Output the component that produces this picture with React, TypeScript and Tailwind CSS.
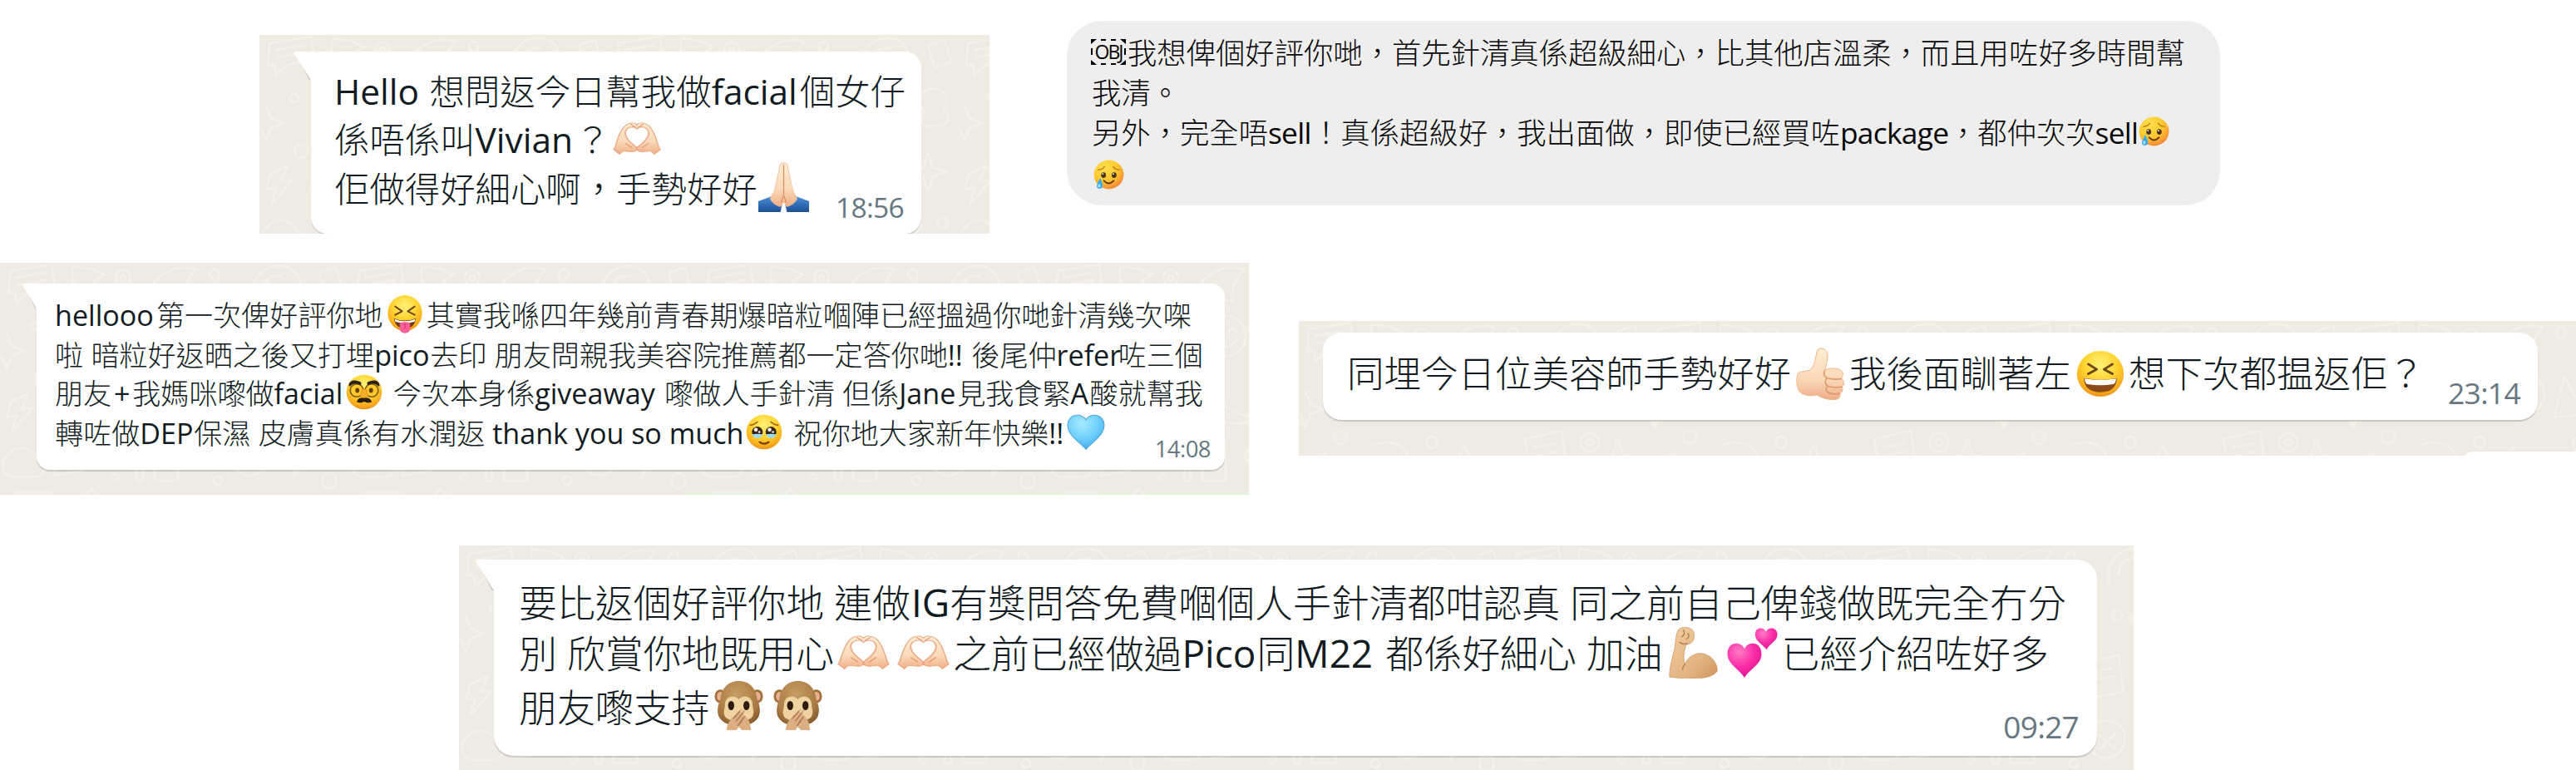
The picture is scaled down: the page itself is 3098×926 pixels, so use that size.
import type { ReactNode } from "react";
import clsx from "clsx";

/* ---------- Emoji ---------- */

interface EmojiProps {
  label: string;
  className: string;
  children: ReactNode;
}

const Emoji = ({ label, className, children }: EmojiProps) => (
  <svg
    role="img"
    aria-label={label}
    viewBox="0 0 64 64"
    preserveAspectRatio="none"
    className={clsx("block shrink-0", className)}
  >
    {children}
  </svg>
);

const Gradients = () => (
  <svg className="absolute h-0 w-0" aria-hidden="true">
    <defs>
      <radialGradient id="face" cx="0.5" cy="0.3" r="0.72">
        <stop offset="0" stopColor="#fff27a" />
        <stop offset="0.5" stopColor="#ffd42f" />
        <stop offset="0.85" stopColor="#f9a91c" />
        <stop offset="1" stopColor="#e98a10" />
      </radialGradient>
      <radialGradient id="softFace" cx="0.35" cy="0.25" r="0.85">
        <stop offset="0" stopColor="#ffe14d" />
        <stop offset="0.55" stopColor="#ffc62e" />
        <stop offset="1" stopColor="#f47b3a" />
      </radialGradient>
      <linearGradient id="skin" x1="0" y1="0" x2="0" y2="1">
        <stop offset="0" stopColor="#fdeed3" />
        <stop offset="0.6" stopColor="#fad9b8" />
        <stop offset="1" stopColor="#efae86" />
      </linearGradient>
      <linearGradient id="tanSkin" x1="0" y1="0" x2="1" y2="1">
        <stop offset="0" stopColor="#f0cd9f" />
        <stop offset="0.6" stopColor="#e5b685" />
        <stop offset="1" stopColor="#cf955f" />
      </linearGradient>
      <linearGradient id="sleeve" x1="0" y1="0" x2="0" y2="1">
        <stop offset="0" stopColor="#4a8fd8" />
        <stop offset="1" stopColor="#1d5095" />
      </linearGradient>
      <radialGradient id="blueHeart" cx="0.4" cy="0.25" r="0.8">
        <stop offset="0" stopColor="#a5eaff" />
        <stop offset="0.55" stopColor="#6fd0fb" />
        <stop offset="1" stopColor="#3fa5e8" />
      </radialGradient>
      <radialGradient id="pinkHeart" cx="0.35" cy="0.25" r="0.85">
        <stop offset="0" stopColor="#ff7cc6" />
        <stop offset="0.5" stopColor="#fb2ea8" />
        <stop offset="1" stopColor="#e0108c" />
      </radialGradient>
      <radialGradient id="fur" cx="0.45" cy="0.3" r="0.75">
        <stop offset="0" stopColor="#c79d63" />
        <stop offset="0.7" stopColor="#a87a42" />
        <stop offset="1" stopColor="#855a2c" />
      </radialGradient>
    </defs>
  </svg>
);

const HeartHands = ({ className }: { className: string }) => (
  <Emoji label="heart hands" className={className}>
    <path
      d="M1 54C4 48 4 43 6 35C8 26 10 17 15 9C18 3 24 0 29 2C31 3 32 4 32 6C32 4 33 3 35 2C40 0 46 3 49 9C54 17 56 26 58 35C60 43 60 48 63 54L55 63C53 59 51 56 47 57C41 58 37 60 32 55C27 60 23 58 17 57C13 56 11 59 9 63Z"
      fill="url(#skin)"
      stroke="#eaa77f"
      strokeWidth="1.4"
    />
    <path
      d="M32 13C28 7 18 8 16.500 20C16 31 24 41 32 50C40 41 48 31 47.500 20C46 8 36 7 32 13Z"
      fill="#fff"
      stroke="#eba985"
      strokeWidth="1.8"
    />
    <path
      d="M24 4L30 10M40 4L34 10M17 42L25 50M47 42L39 50M32 50V55"
      stroke="#e69b77"
      strokeWidth="1.8"
      strokeLinecap="round"
      fill="none"
    />
  </Emoji>
);

const FoldedHands = ({ className }: { className: string }) => (
  <Emoji label="folded hands" className={className}>
    <path d="M0 50L16 44L30 54L28 64H0Z" fill="url(#sleeve)" />
    <path d="M64 50L48 44L34 54L36 64H64Z" fill="url(#sleeve)" />
    <path
      d="M31.5 1C28 0 27 3 26.500 8L21 34C20 40 16 43 15 47C18 53 23 56 28 57L32 51L36 57C41 56 46 53 49 47C48 43 44 40 43 34L37.500 8C37 3 36 0 32.500 1Z"
      fill="url(#skin)"
      stroke="#eeb48d"
      strokeWidth="0.8"
    />
    <path d="M32 3V43C31 46 29 48 29 52M32 43C33 46 35 48 35 52" stroke="#dd9167" strokeWidth="1.4" fill="none" />
  </Emoji>
);

const TearySmile = ({ className }: { className: string }) => (
  <Emoji label="smiling face with tear" className={className}>
    <circle cx="32" cy="32" r="31" fill="url(#softFace)" />
    <ellipse cx="21" cy="33" rx="5" ry="6" fill="#4a3420" />
    <ellipse cx="43" cy="33" rx="5" ry="6" fill="#4a3420" />
    <circle cx="19.500" cy="30.500" r="1.600" fill="#fff" />
    <circle cx="41.500" cy="30.500" r="1.600" fill="#fff" />
    <path d="M10 22Q19 21 23 15M41 15Q45 21 54 22" stroke="#c27a1c" strokeWidth="2.600" fill="none" strokeLinecap="round" />
    <path d="M22 45Q32 56 42 45" stroke="#693a10" strokeWidth="3.500" fill="none" strokeLinecap="round" />
    <path d="M14 39C17 46 20 52 19 57C18 64 7 64 7 57C7 51 11 46 14 39Z" fill="#3cabee" />
    <ellipse cx="12" cy="56" rx="2.500" ry="4" fill="#9fe0ff" />
  </Emoji>
);

const SquintTongue = ({ className }: { className: string }) => (
  <Emoji label="squinting face with tongue" className={className}>
    <circle cx="32" cy="30" r="30" fill="url(#face)" />
    <path d="M15 19L27 27L15 33M49 19L37 27L49 33" stroke="#70451a" strokeWidth="2.800" fill="none" strokeLinecap="round" strokeLinejoin="round" />
    <path d="M13 39Q32 46 51 39Q49 55 32 56Q15 55 13 39Z" fill="#6d3a12" />
    <path d="M14 40Q32 47 50 40L49 44Q32 50 15 44Z" fill="#fff" />
    <path d="M23 47Q32 43 41 47V56C41 66 23 66 23 56Z" fill="#fb5f97" />
    <path d="M32 47V56" stroke="#d93a76" strokeWidth="1.800" />
  </Emoji>
);

const Disguise = ({ className }: { className: string }) => (
  <Emoji label="disguised face" className={className}>
    <circle cx="32" cy="32" r="31" fill="url(#face)" />
    <circle cx="19" cy="29" r="11.500" fill="#ffc928" stroke="#7a5a1c" strokeWidth="2.400" />
    <circle cx="45" cy="29" r="11.500" fill="#ffc928" stroke="#7a5a1c" strokeWidth="2.400" />
    <ellipse cx="20" cy="29" rx="3.500" ry="4.500" fill="#6a3e16" />
    <ellipse cx="44" cy="29" rx="3.500" ry="4.500" fill="#6a3e16" />
    <path d="M5 20C6 10 18 9 27 15L26 20C19 16 12 16 7 22Z" fill="#2b211a" />
    <path d="M59 20C58 10 46 9 37 15L38 20C45 16 52 16 57 22Z" fill="#2b211a" />
    <path d="M28 28Q32 24 36 28L39 40Q32 46 25 40Z" fill="#f8ad27" stroke="#cf861a" strokeWidth="1" />
    <path d="M32 43C25 41 20 44 19 50C24 52 28 51 32 49C36 51 40 52 45 50C44 44 39 41 32 43Z" fill="#2b1d16" />
  </Emoji>
);

const HoldingTears = ({ className }: { className: string }) => (
  <Emoji label="face holding back tears" className={className}>
    <circle cx="32" cy="32" r="31" fill="url(#face)" />
    <circle cx="20" cy="32" r="9.500" fill="#382515" />
    <circle cx="44" cy="32" r="9.500" fill="#382515" />
    <circle cx="17.500" cy="28" r="3.300" fill="#fff" />
    <circle cx="41.500" cy="28" r="3.300" fill="#fff" />
    <circle cx="23.500" cy="32" r="1.800" fill="#fff" />
    <circle cx="47.500" cy="32" r="1.800" fill="#fff" />
    <path d="M11 36Q20 35 29 36Q27 43 20 43Q12 42 11 36ZM35 36Q44 35 53 36Q52 42 44 43Q37 43 35 36Z" fill="#9bdcf8" />
    <path d="M8 20Q15 19 20 14M44 14Q49 19 56 20" stroke="#a5641a" strokeWidth="2.600" fill="none" strokeLinecap="round" />
    <path d="M24 50Q32 56 40 50" stroke="#70410f" strokeWidth="3.200" fill="none" strokeLinecap="round" />
  </Emoji>
);

const LightBlueHeart = ({ className }: { className: string }) => (
  <Emoji label="light blue heart" className={className}>
    <path
      d="M32 10C27 -1 3 -3 1.500 19C0.500 38 22 50 32 63C42 50 63.500 38 62.500 19C61 -3 37 -1 32 10Z"
      fill="url(#blueHeart)"
      stroke="#4fa6d8"
      strokeWidth="1.500"
    />
  </Emoji>
);

const ThumbsUp = ({ className }: { className: string }) => (
  <Emoji label="thumbs up" className={className}>
    <path
      d="M3 31C9 28 16 30 20 26C26 20 26 10 28 4C31 -2 41 1 42 9C43 15 39 21 39 27C45 25 57 24 61 29C63 32 62 36 60 38C65 41 64 46 61 48C63 52 61 55 58 56C60 62 55 64 49 63.500C42 64 33 61 28 58C19 60 8 58 4 53C0 46 0 36 3 31Z"
      fill="url(#skin)"
      stroke="#eab38a"
      strokeWidth="1"
    />
    <path
      d="M60 38Q50 40 41 37Q35 34 38 28M61 48Q50 50 42 47Q36 43 41 37M58 56Q50 58 43 55Q37 52 42 47"
      stroke="#e0996f"
      strokeWidth="1.700"
      fill="none"
      strokeLinecap="round"
    />
  </Emoji>
);

const Laughing = ({ className }: { className: string }) => (
  <Emoji label="grinning squinting face" className={className}>
    <circle cx="32" cy="32" r="31" fill="url(#face)" />
    <path d="M16 19L27 26L16 32M48 19L37 26L48 32" stroke="#70451a" strokeWidth="3.200" fill="none" strokeLinecap="round" strokeLinejoin="round" />
    <path d="M10 38Q32 42 54 38Q53 57 32 57Q11 57 10 38Z" fill="#8a4b18" />
    <path d="M11 38.500Q32 42 53 38.500Q52 46 49 46Q32 49 15 46Q12 46 11 38.500Z" fill="#fff" />
  </Emoji>
);

const Biceps = ({ className }: { className: string }) => (
  <Emoji label="flexed biceps" className={className}>
    <path
      d="M13 3C17 -1 27 0 31 4C34 8 34 14 31 18C28 22 24 21 22 23C20 31 18 38 21 46C25 36 38 30 48 34C59 38 64 48 63 55C58 62 44 64 32 64C20 64 8 63 1 62C0 50 6 36 8 24C9 15 10 6 13 3Z"
      fill="url(#tanSkin)"
      stroke="#cb9865"
      strokeWidth="0.800"
    />
    <path d="M21 46C19 48 18 50 18 53M14 19Q19 23 24 20M19 4Q22 9 17 12M25 8Q28 12 23 15" stroke="#b97f4d" strokeWidth="1.500" fill="none" strokeLinecap="round" />
  </Emoji>
);

const TwoHearts = ({ className }: { className: string }) => (
  <Emoji label="two hearts" className={className}>
    <path d="M22 27C18 17 1 17 0.500 33C0.500 47 16 53 22 64C28 53 44 47 43.500 33C43 17 26 17 22 27Z" fill="url(#pinkHeart)" />
    <path d="M49 5C46 -2 35 -1 35.500 9C36 18 45 21 50 28C54 20 64 17 63.500 8C63 -1 52 -2 49 5Z" fill="url(#pinkHeart)" />
  </Emoji>
);

const Monkey = ({ className }: { className: string }) => (
  <Emoji label="speak-no-evil monkey" className={className}>
    <ellipse cx="8" cy="20" rx="7.500" ry="9" fill="#a0713c" />
    <ellipse cx="56" cy="20" rx="7.500" ry="9" fill="#a0713c" />
    <ellipse cx="8" cy="20" rx="4.500" ry="6" fill="#e8b195" />
    <ellipse cx="56" cy="20" rx="4.500" ry="6" fill="#e8b195" />
    <path d="M32 0C18 0 9 10 8 24C4 32 3 42 7 48C12 56 22 58 32 58C42 58 52 56 57 48C61 42 60 32 56 24C55 10 46 0 32 0Z" fill="url(#fur)" />
    <path d="M32 24C27 17 14 19 14 31C14 37 11 40 14 46C18 54 46 54 50 46C53 40 50 37 50 31C50 19 37 17 32 24Z" fill="#eed3a0" />
    <ellipse cx="22" cy="32" rx="4" ry="6" fill="#2d1b10" />
    <ellipse cx="42" cy="32" rx="4" ry="6" fill="#2d1b10" />
    <path d="M16 64C17 54 22 49 29 42C33 38 35 36 36 37L33 43L38 38C41 37 41 39 37 45C42 43 41 47 43 49C47 53 47 59 48 64H36L32 60L29 64Z" fill="#dcae82" />
    <path d="M25 49L33 40M29 52L37 42M33 55L39 47M31 58L36 52" stroke="#a5704a" strokeWidth="1.300" strokeLinecap="round" />
  </Emoji>
);

/* ---------- Chat wallpaper ---------- */

const Wallpaper = ({ id }: { id: string }) => (
  <svg className="absolute inset-0 h-full w-full" aria-hidden="true">
    <defs>
      <pattern id={id} width="420" height="300" patternUnits="userSpaceOnUse">
        <g fill="none" stroke="#f5f1ea" strokeWidth="2.500" strokeLinejoin="round" strokeLinecap="round">
          <path d="M12 10L62 2L66 30L34 36L20 48L18 36L10 36ZM20 18L54 12M22 27L54 21" />
          <path d="M88 4C84 20 92 26 86 34L102 28L112 38L114 22L126 14L112 8Z" />
          <circle cx="148" cy="18" r="9" />
          <circle cx="148" cy="18" r="3" />
          <path d="M180 40C182 14 214 0 236 8C226 18 220 34 222 46Z" />
          <circle cx="258" cy="14" r="6" />
          <circle cx="284" cy="34" r="4" />
          <path d="M304 44C300 18 318 2 340 4C362 8 366 30 356 46M316 36C316 22 324 14 338 16" />
          <path d="M384 12L404 6L412 32L392 40Z" />
          <path d="M8 84L14 100L30 106L14 112L8 128L2 112" />
          <circle cx="42" cy="76" r="5" />
          <circle cx="50" cy="140" r="8" />
          <path d="M82 70L122 60L132 98L92 108ZM92 78L120 71M94 87L122 80" />
          <path d="M150 74C160 60 180 66 176 82C172 96 158 104 152 110C146 100 136 88 150 74Z" />
          <circle cx="214" cy="88" r="24" />
          <path d="M202 84C202 78 210 78 210 84M218 84C218 78 226 78 226 84M202 94Q214 108 226 94" />
          <path d="M262 66L286 112L250 116Z" />
          <circle cx="314" cy="84" r="6" />
          <path d="M344 70L348 84L362 88L348 92L344 106L340 92L326 88L340 84Z" />
          <path d="M384 66C400 60 414 76 402 90C416 96 406 114 392 108C380 116 370 100 380 92C370 82 372 70 384 66Z" />
          <path d="M14 166L34 158L26 176L40 174L14 204L20 184L8 186Z" />
          <circle cx="66" cy="184" r="5" />
          <path d="M88 150C110 140 134 150 132 172C130 192 104 194 96 178M104 166H120" />
          <circle cx="160" cy="146" r="7" />
          <circle cx="176" cy="172" r="4" />
          <path d="M200 150C206 170 222 182 246 186C240 196 216 196 202 184C192 174 192 158 200 150Z" />
          <path d="M272 142L316 132L322 176L280 184ZM284 152L308 147M286 162L310 157" />
          <circle cx="350" cy="146" r="11" />
          <circle cx="350" cy="146" r="4" />
          <path d="M384 142L390 160L408 164L390 170L384 188L378 170L362 166L378 160Z" />
          <path d="M8 232C20 216 40 222 44 236C58 238 56 258 40 258H16C2 256 0 240 8 232Z" />
          <path d="M76 216L98 250L64 256Z" />
          <circle cx="124" cy="226" r="9" />
          <circle cx="138" cy="258" r="4" />
          <path d="M164 210V262M172 210V262M164 262H172M186 216H214V262H186ZM194 230H206V240H194Z" />
          <circle cx="244" cy="232" r="7" />
          <circle cx="262" cy="262" r="5" />
          <path d="M288 214C310 204 330 220 322 240C314 262 286 260 280 240C278 228 280 220 288 214ZM292 228L312 244M312 226L292 246" />
          <path d="M352 220L372 212L364 230L378 228L352 258L358 238L346 240Z" />
          <circle cx="402" cy="226" r="6" />
          <circle cx="396" cy="262" r="9" />
          <path d="M20 276H60M30 286L50 282M96 286L110 272L124 288M180 288C190 276 210 278 214 290M310 280L318 292L332 284" />
        </g>
      </pattern>
    </defs>
    <rect width="100%" height="100%" fill={`url(#${id})`} />
  </svg>
);

/* ---------- Layout pieces ---------- */

interface PanelProps {
  id: string;
  className: string;
  children: ReactNode;
}

const Panel = ({ id, className, children }: PanelProps) => (
  <section className={clsx("relative shrink-0 overflow-hidden bg-[#efeae2]", className)}>
    <Wallpaper id={id} />
    {children}
  </section>
);

const Tail = ({ className }: { className: string }) => (
  <svg viewBox="0 0 22 36" preserveAspectRatio="none" className={clsx("absolute top-0 right-full", className)} aria-hidden="true">
    <path d="M3 2.500L22 38" stroke="#cfcac2" strokeWidth="2" />
    <path d="M23 0H2.500Q-0.500 0.500 0.800 3.500L22 36H23Z" fill="#fff" />
  </svg>
);

const Line = ({ className, children }: { className: string; children: ReactNode }) => (
  <p className={clsx("flex items-baseline whitespace-pre", className)}>{children}</p>
);

const Zh = ({ children }: { children: ReactNode }) => (
  <span className="shrink-0 font-light">{children}</span>
);

const En = ({ className, children }: { className: string; children: ReactNode }) => (
  <span className={clsx("shrink-0 font-['Open_Sans','Noto_Sans_CJK_TC',sans-serif] text-[1em] font-[370]", className)}>{children}</span>
);

// Fixed slot that keeps an emoji centred on its line
const Slot = ({ className, children }: { className: string; children: ReactNode }) => (
  <span className={clsx("flex shrink-0 items-center justify-center self-center", className)}>{children}</span>
);

const Time = ({ className, children }: { className: string; children: ReactNode }) => (
  <time className={clsx("ml-auto shrink-0 self-end font-['Open_Sans',sans-serif] leading-none tracking-[-0.02em] text-[#667781]", className)}>
    {children}
  </time>
);

// U+FFFC placeholder: dashed frame with solid corners
const ObjectBox = () => (
  <span className="relative mr-[2px] -ml-[1px] flex h-[31px] w-[42px] shrink-0 items-center justify-center self-center">
    <svg viewBox="0 0 42 31" className="absolute inset-0 h-full w-full" aria-hidden="true">
      <path d="M0 0H7L0 6ZM42 0H35L42 6ZM0 31H7L0 25ZM42 31H35L42 25Z" fill="#000" />
      <path d="M12 1H18M24 1H30M12 30H18M24 30H30M1 11V19M41 11V19" stroke="#000" strokeWidth="2" />
    </svg>
    <span className="font-['Open_Sans',sans-serif] text-[23px] leading-none font-medium tracking-[-2px]">OBJ</span>
  </span>
);

/* ---------- Reviews ---------- */

const VivianReview = () => (
  <Panel id="wall-vivian" className="mt-[42px] h-[239px] w-[878px] pt-5 pl-[62px]">
    <div className="relative h-[219px] w-[734px] rounded-[20px] rounded-tl-none bg-white pt-[17px] pr-[21px] pl-7 text-[42.4px] text-[#111b21] shadow-[0_2px_1px_rgba(11,20,26,0.13)]">
      <Tail className="h-[34px] w-[21px]" />
      <Line className="h-[58px] leading-[58px]">
        <En className="w-[114.5px]">Hello </En>
        <Zh>想問返今日幫我做</Zh>
        <En className="w-[106px]">facial</En>
        <Zh>個女仔</Zh>
      </Line>
      <Line className="h-[58px] leading-[58px]">
        <Zh>係唔係叫</Zh>
        <En className="w-[120px]">Vivian</En>
        <Zh>？</Zh>
        <Slot className="w-[64px]">
          <HeartHands className="h-[39px] w-[58px]" />
        </Slot>
      </Line>
      <Line className="h-[60px] leading-[60px]">
        <Zh>佢做得好細心啊，手勢好好</Zh>
        <Slot className="w-[64px]">
          <FoldedHands className="h-[60px] w-[61px]" />
        </Slot>
        <Time className="-mb-[11px] text-[33.500px]">18:56</Time>
      </Line>
    </div>
  </Panel>
);

const SellReview = () => (
  <section className="mt-[25px] ml-[93px] h-[222px] w-[1387px] shrink-0 rounded-[42px] bg-[#eeeeee] pt-[13px] pl-[30px] text-[35.33px] text-[#050505]">
    <Line className="h-12 leading-[48px]">
      <ObjectBox />
      <Zh>我想俾個好評你哋，首先針清真係超級細心，比其他店溫柔，而且用咗好多時間幫</Zh>
    </Line>
    <Line className="h-12 leading-[48px]">
      <Zh>我清。</Zh>
    </Line>
    <Line className="h-12 leading-[48px]">
      <Zh>另外，完全唔</Zh>
      <En className="w-[52px] tracking-[-0.02em]">sell</En>
      <Zh>！真係超級好，我出面做，即使已經買咗</Zh>
      <En className="w-[130px] tracking-[-0.02em]">package</En>
      <Zh>，都仲次次</Zh>
      <En className="w-[51px] tracking-[-0.02em]">sell</En>
      <Slot className="w-10">
        <TearySmile className="h-9 w-[37px]" />
      </Slot>
    </Line>
    <Line className="h-[55px] leading-[55px]">
      <Slot className="w-10">
        <TearySmile className="h-9 w-[37px]" />
      </Slot>
    </Line>
  </section>
);

const HelloReview = () => (
  <Panel id="wall-hello" className="h-[279px] w-[1502px] pt-[25px] pl-11">
    <div className="relative h-[224px] w-[1429px] rounded-2xl rounded-tl-none bg-white pt-[12px] pr-[17px] pl-[22px] text-[34.1px] text-[#111b21] shadow-[0_2px_1px_rgba(11,20,26,0.16)]">
      <Tail className="h-[30px] w-[17px]" />
      <Line className="h-[49px] leading-[49px]">
        <En className="w-[122px]">hellooo</En>
        <Zh>第一次俾好評你地</Zh>
        <Slot className="w-[52px]">
          <SquintTongue className="h-[46px] w-[44px]" />
        </Slot>
        <Zh>其實我喺四年幾前青春期爆暗粒嗰陣已經搵過你哋針清幾次㗎</Zh>
      </Line>
      <Line className="h-[46px] leading-[46px]">
        <Zh>啦</Zh>
        <En className="w-[9.300px]"> </En>
        <Zh>暗粒好返晒之後又打埋</Zh>
        <En className="w-[67px]">pico</En>
        <Zh>去印</Zh>
        <En className="w-[9.300px]"> </En>
        <Zh>朋友問親我美容院推薦都一定答你哋</Zh>
        <En className="w-[28.500px]">!! </En>
        <Zh>後尾仲</Zh>
        <En className="w-[74px]">refer</En>
        <Zh>咗三個</Zh>
      </Line>
      <Line className="h-[47px] leading-[47px]">
        <Zh>朋友</Zh>
        <En className="w-[25px] text-center">+</En>
        <Zh>我媽咪嚟做</Zh>
        <En className="w-[82px]">facial</En>
        <Slot className="w-[52px]">
          <Disguise className="h-[43px] w-[44px]" />
        </Slot>
        <En className="w-[9.300px]"> </En>
        <Zh>今次本身係</Zh>
        <En className="w-[156px]">giveaway </En>
        <Zh>嚟做人手針清</Zh>
        <En className="w-[9.300px]"> </En>
        <Zh>但係</Zh>
        <En className="w-[70px]">Jane</En>
        <Zh>見我食緊</Zh>
        <En className="w-[23px]">A</En>
        <Zh>酸就幫我</Zh>
      </Line>
      <Line className="h-[48px] leading-[48px]">
        <Zh>轉咗做</Zh>
        <En className="w-[65px]">DEP</En>
        <Zh>保濕</Zh>
        <En className="w-[9.300px]"> </En>
        <Zh>皮膚真係有水潤返</Zh>
        <En className="w-[310px]"> thank you so much</En>
        <Slot className="w-[52px]">
          <HoldingTears className="h-[43px] w-[44px]" />
        </Slot>
        <En className="w-[9.300px]"> </En>
        <Zh>祝你地大家新年快樂</Zh>
        <En className="w-[19px]">!!</En>
        <Slot className="w-[52px]">
          <LightBlueHeart className="h-[43px] w-[46px]" />
        </Slot>
        <Time className="-mb-[10px] text-[27.500px]">14:08</Time>
      </Line>
    </div>
    {/* Top edge of the next outgoing message */}
    <div className="mt-[28px] ml-[781px] h-[2px] bg-[#dff5d8]" />
  </Panel>
);

const ThumbReview = () => (
  <Panel id="wall-thumb" className="mt-[70px] ml-[60px] h-[162px] w-[1536px] pt-[14px] pl-[29px]">
    <div className="relative h-[105px] w-[1461px] rounded-[22px] bg-white pt-[16px] pr-[21px] pl-[29px] text-[44.5px] text-[#111b21] shadow-[0_2px_1px_rgba(11,20,26,0.16)]">
      <Line className="h-[66px] leading-[62px]">
        <Zh>同埋今日位美容師手勢好好</Zh>
        <Slot className="w-[70px]">
          <ThumbsUp className="h-[63px] w-[58px]" />
        </Slot>
        <Zh>我後面瞓著左</Zh>
        <Slot className="w-[69px]">
          <Laughing className="h-[57px] w-[58px]" />
        </Slot>
        <Zh>想下次都揾返佢？</Zh>
        <Time className="-mb-2 text-[35.500px]">23:14</Time>
      </Line>
    </div>
    {/* Top of the following bubble */}
    <div className="relative mt-[38px] ml-[1372px] h-5 w-[180px] rounded-[16px] bg-white" />
  </Panel>
);

const PicoReview = () => (
  <Panel id="wall-pico" className="ml-[552px] h-[270px] w-[2014px] pt-[17px] pl-[42px]">
    <div className="relative h-[236px] w-[1928px] rounded-3xl rounded-tl-none bg-white pt-[18px] pr-[22px] pl-[30px] text-[45.9px] text-[#111b21] shadow-[0_2px_1px_rgba(11,20,26,0.16)]">
      <Tail className="h-[37px] w-[22px]" />
      <Line className="h-[62px] leading-[62px]">
        <Zh>要比返個好評你地</Zh>
        <En className="w-3"> </En>
        <Zh>連做</Zh>
        <En className="w-[47px] pl-px">IG</En>
        <Zh>有獎問答免費嗰個人手針清都咁認真</Zh>
        <En className="w-3"> </En>
        <Zh>同之前自己俾錢做既完全冇分</Zh>
      </Line>
      <Line className="h-[63px] leading-[61px]">
        <Zh>別</Zh>
        <En className="w-3"> </En>
        <Zh>欣賞你地既用心</Zh>
        <Slot className="w-[71.500px]">
          <HeartHands className="h-[41px] w-[63px]" />
        </Slot>
        <Slot className="w-[71.500px]">
          <HeartHands className="h-[41px] w-[63px]" />
        </Slot>
        <Zh>之前已經做過</Zh>
        <En className="w-[90px]">Pico</En>
        <Zh>同</Zh>
        <En className="w-[109px]">M22 </En>
        <Zh>都係好細心</Zh>
        <En className="w-3"> </En>
        <Zh>加油</Zh>
        <Slot className="w-[73px]">
          <Biceps className="h-[62px] w-[59px]" />
        </Slot>
        <Slot className="w-[70px]">
          <TwoHearts className="h-[60px] w-[61px]" />
        </Slot>
        <Zh>已經介紹咗好多</Zh>
      </Line>
      <Line className="h-[65px] leading-[64px]">
        <Zh>朋友嚟支持</Zh>
        <Slot className="w-[71px]">
          <Monkey className="h-[59px] w-[59px]" />
        </Slot>
        <Slot className="w-[71px]">
          <Monkey className="h-[59px] w-[59px]" />
        </Slot>
        <Time className="-mb-[11px] text-[37px]">09:27</Time>
      </Line>
    </div>
  </Panel>
);

export default function App() {
  return (
    <main className="h-[926px] w-[3098px] overflow-hidden bg-white font-['Noto_Sans_CJK_TC',sans-serif]">
      <Gradients />
      <div className="flex h-[316px] items-start pl-[312px]">
        <VivianReview />
        <SellReview />
      </div>
      <div className="flex h-[340px] items-start">
        <HelloReview />
        <ThumbReview />
      </div>
      <div className="flex items-start">
        <PicoReview />
      </div>
    </main>
  );
}
